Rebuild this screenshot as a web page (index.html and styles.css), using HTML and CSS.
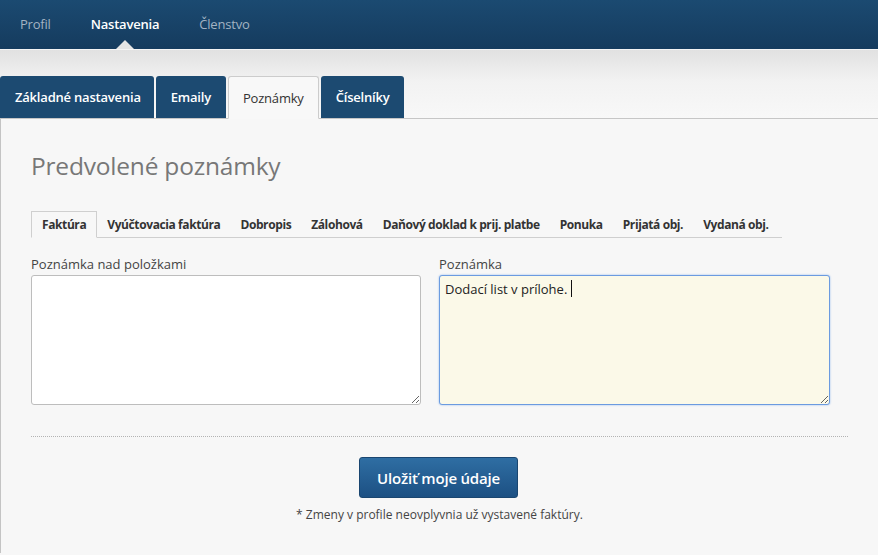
FILE: index.html
```html
<!DOCTYPE html>
<html lang="sk">
<head>
<meta charset="utf-8">
<title>Nastavenia</title>
<link rel="stylesheet" href="styles.css">
</head>
<body>
<div class="page">
  <nav class="topnav">
    <a class="topnav-item">Profil</a>
    <a class="topnav-item active"><span class="topnav-label">Nastavenia</span><svg class="pointer" width="18" height="9" viewBox="0 0 18 9"><polygon points="9,0 18,9 0,9" fill="#e4e4e4"/></svg></a>
    <a class="topnav-item">Členstvo</a>
  </nav>
  <div class="band">
    <div class="tabs">
      <a class="tab">Základné nastavenia</a>
      <a class="tab">Emaily</a>
      <a class="tab active">Poznámky</a>
      <a class="tab">Číselníky</a>
    </div>
  </div>
  <main class="content">
    <h1 class="title">Predvolené poznámky</h1>
    <div class="subtabs">
      <a class="subtab active">Faktúra</a>
      <a class="subtab">Vyúčtovacia faktúra</a>
      <a class="subtab">Dobropis</a>
      <a class="subtab">Zálohová</a>
      <a class="subtab">Daňový doklad k prij. platbe</a>
      <a class="subtab">Ponuka</a>
      <a class="subtab">Prijatá obj.</a>
      <a class="subtab">Vydaná obj.</a>
    </div>
    <div class="fields">
      <label class="field">
        <span class="label">Poznámka nad položkami</span>
        <textarea class="area"></textarea>
      </label>
      <label class="field">
        <span class="label">Poznámka</span>
        <span class="area-wrap">
          <textarea class="area focused">Dodací list v prílohe. </textarea>
          <span class="caret"></span>
        </span>
      </label>
    </div>
    <div class="actions">
      <button class="btn">Uložiť moje údaje</button>
      <p class="note">* Zmeny v profile neovplyvnia už vystavené faktúry.</p>
    </div>
  </main>
</div>
</body>
</html>
```

FILE: styles.css
```css
html, body {
  margin: 0;
  padding: 0;
  background: #ffffff;
}
body {
  font-family: "Open Sans", "DejaVu Sans", sans-serif;
  color: #333;
}
.page {
  width: 878px;
  min-height: 555px;
  background: #f7f7f7;
}
.topnav {
  height: 49px;
  display: flex;
  align-items: stretch;
  padding-left: 20px;
  gap: 40px;
  background: linear-gradient(#1b4a71, #153b5e);
  border-bottom: 1px solid #f4f4f4;
}
.topnav-item {
  display: flex;
  align-items: center;
  font-size: 13px;
  color: #a3b3c3;
  letter-spacing: -0.2px;
  padding-bottom: 2px;
}
.topnav-item.active {
  flex-direction: column;
  align-items: center;
  padding-bottom: 0;
  color: #ffffff;
  font-weight: 600;
}
.topnav-label {
  flex: 1;
  display: flex;
  align-items: center;
  padding-top: 7px;
}
.pointer {
  display: block;
  flex-shrink: 0;
}
.band {
  height: 68px;
  display: flex;
  align-items: flex-end;
  background: linear-gradient(#e1e1e1 0%, #f2f2f2 45%, #f8f8f8 100%);
  border-bottom: 1px solid #c6c6c6;
}
.tabs {
  display: flex;
  gap: 2px;
  margin-bottom: -1px;
}
.tab {
  height: 42px;
  box-sizing: border-box;
  display: flex;
  align-items: center;
  padding: 0 15px;
  background: #1c4a71;
  color: #ffffff;
  font-size: 13px;
  font-weight: 600;
  border-radius: 3px 3px 0 0;
  letter-spacing: -0.2px;
  white-space: nowrap;
}
.tab:first-child {
  padding: 0 13px 0 15px;
}
.tab.active {
  background: #f8f8f8;
  color: #333;
  font-weight: 400;
  border: 1px solid #cccccc;
  border-bottom-color: #f8f8f8;
  height: 43px;
  padding: 0 14px;
}
.content {
  border-left: 1px solid #c4c4c4;
  padding: 0 30px 30px;
}
.title {
  margin: 0;
  padding-top: 30px;
  font-size: 24.5px;
  font-weight: 400;
  color: #777777;
  line-height: 34px;
  letter-spacing: -0.2px;
}
.subtabs {
  display: flex;
  margin-top: 28px;
  width: 751px;
  border-bottom: 1px solid #cfcfcf;
}
.subtab {
  height: 26px;
  box-sizing: border-box;
  display: flex;
  align-items: center;
  padding: 0 10px;
  font-size: 12px;
  font-weight: 700;
  color: #333;
  letter-spacing: -0.4px;
  white-space: nowrap;
  flex-shrink: 0;
}
.subtab.active {
  border: 1px solid #cfcfcf;
  border-bottom-color: #f7f7f7;
  margin-bottom: -1px;
  height: 27px;
  background: #f7f7f7;
  padding: 0 10px;
}
.fields {
  display: grid;
  grid-template-columns: 408px 409px;
  margin-top: 17px;
}
.field {
  display: flex;
  flex-direction: column;
}
.label {
  font-size: 13px;
  color: #444;
  line-height: 18px;
  height: 20px;
}
.area-wrap {
  position: relative;
  display: block;
  width: 391px;
}
.area {
  display: block;
  width: 390px;
  height: 130px;
  box-sizing: border-box;
  margin: 0;
  padding: 4px 5px;
  border: 1px solid #bdbdbd;
  border-radius: 3px;
  background: #ffffff;
  font-family: "Open Sans", "DejaVu Sans", sans-serif;
  font-size: 13px;
  color: #222;
  resize: both;
  outline: none;
}
.area.focused {
  width: 391px;
  background: #fbf9e8;
  border: 1px solid #6b9be0;
  box-shadow: 0 0 2px #8ab4ec;
}
.caret {
  position: absolute;
  left: 132px;
  top: 5px;
  width: 1px;
  height: 17px;
  background: #111;
}
.actions {
  margin-top: 31px;
  border-top: 1px dotted #b3b3b3;
  display: flex;
  flex-direction: column;
  align-items: center;
  padding-top: 20px;
}
.btn {
  width: 159px;
  height: 41px;
  border: 1px solid #1a4670;
  border-radius: 3px;
  background: linear-gradient(#2f6ea3, #1c5083);
  color: #ffffff;
  font-family: "Open Sans", "DejaVu Sans", sans-serif;
  font-size: 15px;
  font-weight: 600;
  letter-spacing: -0.2px;
  margin-left: -2px;
}
.note {
  margin: 9px 0 0;
  font-size: 12px;
  color: #444;
  line-height: 16px;
}
```
